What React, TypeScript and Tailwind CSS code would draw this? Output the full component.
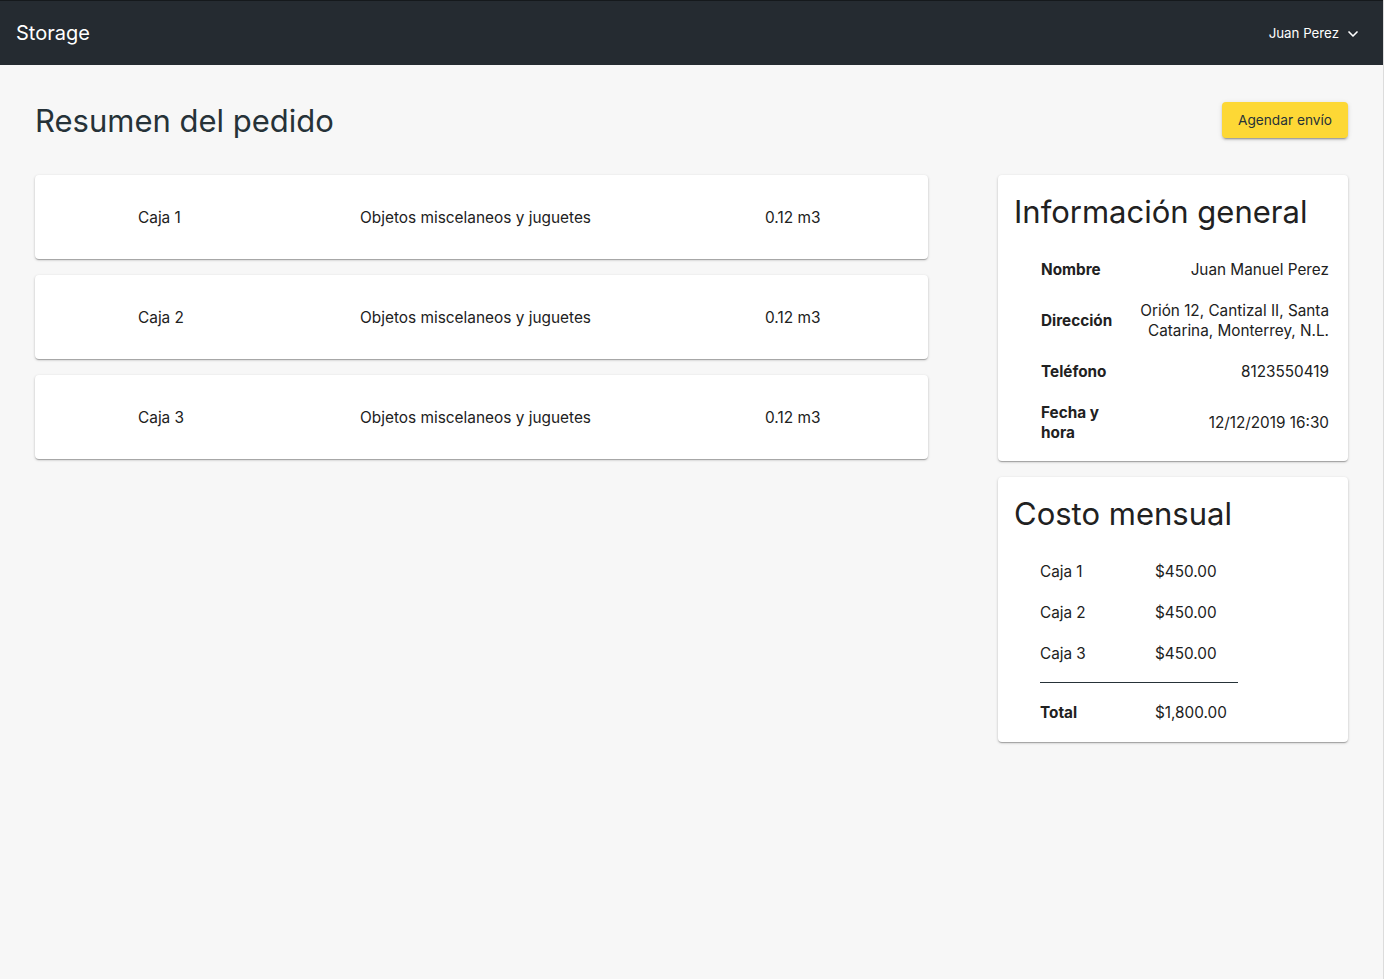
import React from 'react';
import { ChevronDown } from 'lucide-react';

const boxes = [
  { id: 1, name: 'Caja 1', content: 'Objetos miscelaneos y juguetes', volume: '0.12 m3' },
  { id: 2, name: 'Caja 2', content: 'Objetos miscelaneos y juguetes', volume: '0.12 m3' },
  { id: 3, name: 'Caja 3', content: 'Objetos miscelaneos y juguetes', volume: '0.12 m3' },
];

const info = [
  { label: 'Nombre', value: 'Juan Manuel Perez' },
  { label: 'Dirección', value: 'Orión 12, Cantizal II, Santa Catarina, Monterrey, N.L.' },
  { label: 'Teléfono', value: '8123550419' },
  { label: 'Fecha y hora', value: '12/12/2019 16:30' },
];

const paper =
  'bg-white rounded-[4px] shadow-[0_1px_3px_rgba(0,0,0,0.2),0_1px_1px_rgba(0,0,0,0.14),0_2px_1px_-1px_rgba(0,0,0,0.12)]';

export default function App() {
  return (
    <div className="min-h-[979px] flex bg-white font-['Inter',sans-serif] text-[#212121]">
      <div className="flex-1 flex flex-col bg-[#f7f7f7]">
        {/* Header */}
        <header className="h-[65px] bg-[#252b31] border-t border-[#15191c] flex items-center justify-between pl-4 pr-[22px]">
          <span className="text-white text-[20px]">Storage</span>
          <button className="flex items-center gap-1.5 pt-[2px] text-white text-[13.3px]">
            Juan Perez
            <ChevronDown className="h-4 w-4" strokeWidth={2.5} />
          </button>
        </header>

        <main className="px-[35px]">
          {/* Title row */}
          <div className="flex items-start justify-between pt-[37px] pb-[36px]">
            <h1 className="pt-[1px] text-[31px] leading-[36px] text-[#263238]">Resumen del pedido</h1>
            <button className="h-9 px-4 rounded-[4px] bg-[#fdd835] text-[13.7px] text-[#263238] shadow-[0_3px_1px_-2px_rgba(0,0,0,0.2),0_2px_2px_rgba(0,0,0,0.14),0_1px_5px_rgba(0,0,0,0.12)]">
              Agendar envío
            </button>
          </div>

          <div className="grid grid-cols-[1fr_350px] gap-[70px] items-start">
            {/* Boxes */}
            <div className="flex flex-col gap-4">
              {boxes.map((b) => (
                <div key={b.id} className={`${paper} h-[84px] grid grid-cols-[222px_405px_1fr] items-center pl-[103px] pt-[2px] text-[15.4px]`}>
                  <span>{b.name}</span>
                  <span>{b.content}</span>
                  <span>{b.volume}</span>
                </div>
              ))}
            </div>

            {/* Sidebar */}
            <div className="flex flex-col gap-4">
              <div className={`${paper} pt-[15px] pb-[8px]`}>
                <h2 className="px-4 text-[31px] leading-[44px]">Información general</h2>
                <div className="mt-[15px] ml-[43px] mr-[19px] flex flex-col">
                  {info.map((row) => (
                    <div key={row.label} className="grid grid-cols-[74px_1fr] gap-[10px] items-center py-[10.5px] text-[15.3px] leading-[20px]">
                      <span className="font-bold">{row.label}</span>
                      <span className="text-right">{row.value}</span>
                    </div>
                  ))}
                </div>
              </div>

              <div className={`${paper} pt-[15px] pb-[19px]`}>
                <h2 className="px-4 text-[31px] leading-[44px]">Costo mensual</h2>
                <div className="mt-[15px] ml-[42px] w-[198px] text-[15.3px] leading-[20px]">
                  {['Caja 1', 'Caja 2', 'Caja 3'].map((c) => (
                    <div key={c} className="grid grid-cols-[115px_1fr] py-[10.5px]">
                      <span>{c}</span>
                      <span>$450.00</span>
                    </div>
                  ))}
                  <div className="mt-[8px] border-t border-[#263238]" />
                  <div className="grid grid-cols-[115px_1fr] pt-[20px]">
                    <span className="font-bold">Total</span>
                    <span>$1,800.00</span>
                  </div>
                </div>
              </div>
            </div>
          </div>
        </main>
      </div>
      <div className="w-[2px] border-l border-[#dcdcdc] bg-white" />
    </div>
  );
}
